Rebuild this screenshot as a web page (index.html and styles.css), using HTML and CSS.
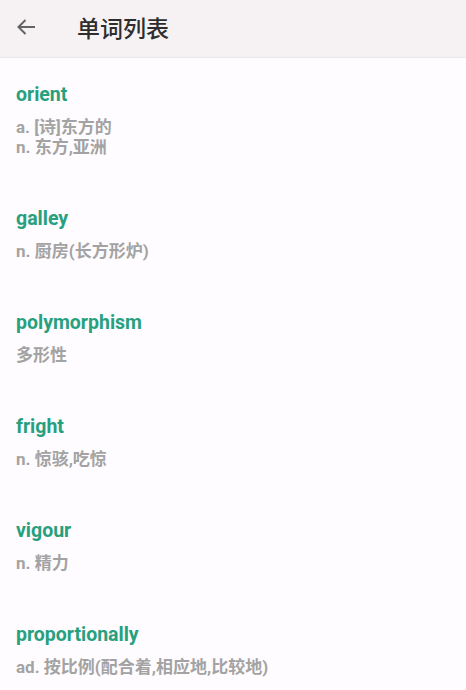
FILE: index.html
```html
<!DOCTYPE html>
<html lang="zh">
<head>
  <meta charset="UTF-8" />
  <meta name="viewport" content="width=device-width, initial-scale=1.0"/>
  <title>单词列表</title>
  <link rel="stylesheet" href="styles.css">
</head>
<body>
  <div class="toolbar">
    <span class="back">
      <svg width="20" height="18" viewBox="0 0 20 18"><path d="M19 9H2.5M9.5 2L2.5 9l7 7" fill="none" stroke="#646464" stroke-width="2"/></svg>
    </span>
    <h1>单词列表</h1>
  </div>

  <ul class="word-list">
    <li>
      <div class="word">orient</div>
      <div class="meaning">a. [诗]东方的</div>
      <div class="meaning">n. 东方,亚洲</div>
    </li>
    <li>
      <div class="word">galley</div>
      <div class="meaning">n. 厨房(长方形炉)</div>
    </li>
    <li>
      <div class="word">polymorphism</div>
      <div class="meaning">多形性</div>
    </li>
    <li>
      <div class="word">fright</div>
      <div class="meaning">n. 惊骇,吃惊</div>
    </li>
    <li>
      <div class="word">vigour</div>
      <div class="meaning">n. 精力</div>
    </li>
    <li>
      <div class="word">proportionally</div>
      <div class="meaning">ad. 按比例(配合着,相应地,比较地)</div>
    </li>
  </ul>
</body>
</html>
```

FILE: styles.css
```css
body {
  margin: 0;
  font-family: Roboto, "Noto Sans CJK SC", sans-serif;
  background-color: #fefcfe;
}

.toolbar {
  display: flex;
  align-items: center;
  height: 53px;
  padding-bottom: 4px;
  background-color: #f6f2f4;
  border-bottom: 1px solid #ebe6e9;
}

.back {
  display: flex;
  margin-left: 16px;
  margin-right: 41px;
}

.toolbar h1 {
  margin: 0;
  font-size: 23px;
  font-weight: 500;
  color: #2e2e2e;
}

.word-list {
  list-style: none;
  margin: 0;
  padding: 0;
}

.word-list li {
  padding: 25px 16px;
}

.word {
  font-size: 19.5px;
  line-height: 24px;
  font-weight: bold;
  color: #27a07e;
  margin-bottom: 10px;
}

.meaning {
  font-size: 17px;
  line-height: 20px;
  font-weight: bold;
  color: #a3a3a3;
}
```
